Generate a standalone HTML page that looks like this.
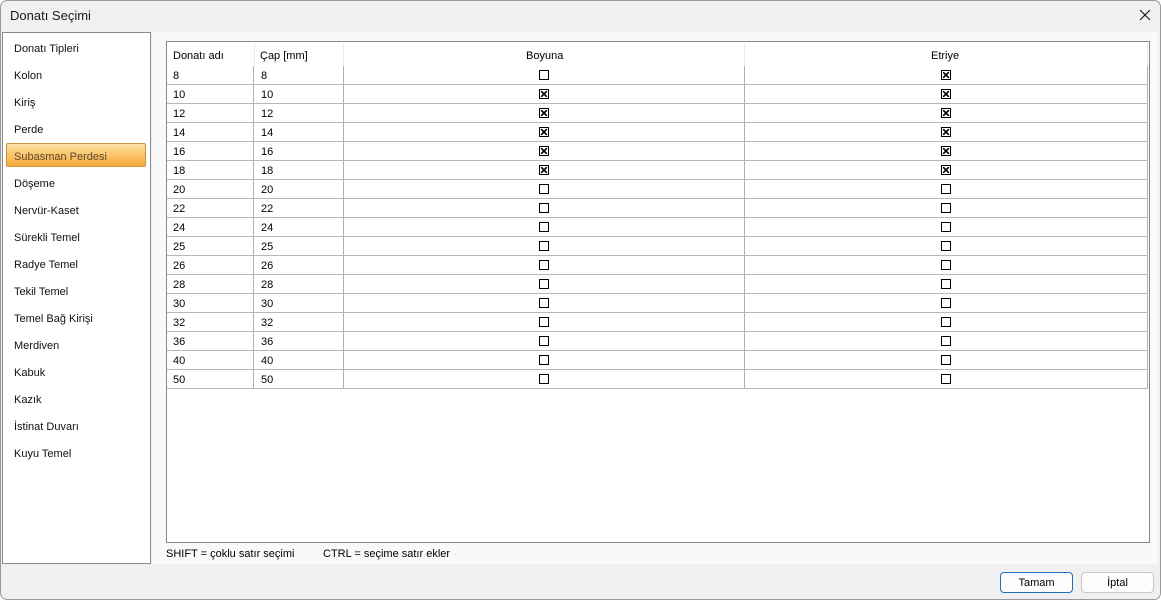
<!DOCTYPE html>
<html><head><meta charset="utf-8"><style>
*{margin:0;padding:0;box-sizing:border-box}
body{width:1161px;height:600px;background:#fff;font-family:"Liberation Sans",sans-serif;font-size:12px;color:#000;position:relative;overflow:hidden}
.win{position:absolute;left:0;top:0;width:1161px;height:600px;background:#f0f0f0;border-radius:7px;overflow:hidden}
.frame{position:absolute;left:0;top:0;width:1161px;height:600px;border:1px solid #9a9a9a;border-radius:7px;pointer-events:none}
.title{position:absolute;left:10px;top:8px;font-size:13px;color:#1a1a1a}
.x{position:absolute;left:1138px;top:8px}
.list{position:absolute;left:2px;top:32px;width:149px;height:532px;background:#fff;border:1px solid #8a8a8a}
.li{position:absolute;left:11px;font-size:11px;color:#111}
.sel{position:absolute;left:3px;top:110px;width:140px;height:24px;border:1px solid #c9963a;border-radius:2px;background:linear-gradient(#fde2a8,#fbc46a 50%,#f6a93c);}
.rp{position:absolute;left:152px;top:32px;width:1006px;height:532px;background:#f9f9f9}
.grid{position:absolute;left:166px;top:41px;width:984px;height:502px;background:#fff;border:1px solid #828790}
.c{position:absolute;font-size:11px}
.hl{position:absolute;height:1px;background:#b8b8b8}
.vl{position:absolute;width:1px;background:#b0b0b0}
.cb{position:absolute;width:10px;height:10px;border:1px solid #000;background:#fff}
.btn{position:absolute;top:572px;width:73px;height:21px;border:1px solid #c8c8c8;border-radius:4px;background:#fdfdfd;font-size:11px;text-align:center;line-height:20px}
</style></head><body><div class="win">
<div class="title">Donatı Seçimi</div>
<svg class="x" width="14" height="14" viewBox="0 0 14 14"><path d="M2 2L12 12M12 2L2 12" stroke="#222" stroke-width="1.2"/></svg>
<div class="list">
<div class="sel"></div>
<div class="li" style="top:10px">Donatı Tipleri</div>
<div class="li" style="top:37px">Kolon</div>
<div class="li" style="top:64px">Kiriş</div>
<div class="li" style="top:91px">Perde</div>
<div class="li" style="top:118px;color:#5a4a30">Subasman Perdesi</div>
<div class="li" style="top:145px">Döşeme</div>
<div class="li" style="top:172px">Nervür-Kaset</div>
<div class="li" style="top:199px">Sürekli Temel</div>
<div class="li" style="top:226px">Radye Temel</div>
<div class="li" style="top:253px">Tekil Temel</div>
<div class="li" style="top:280px">Temel Bağ Kirişi</div>
<div class="li" style="top:307px">Merdiven</div>
<div class="li" style="top:334px">Kabuk</div>
<div class="li" style="top:361px">Kazık</div>
<div class="li" style="top:388px">İstinat Duvarı</div>
<div class="li" style="top:415px">Kuyu Temel</div>
</div>
<div class="rp"></div>
<div class="grid"></div>
<div id="g"></div>
<div class="c" style="left:166px;top:548px;font-size:11px">SHIFT = çoklu satır seçimi</div>
<div class="c" style="left:323px;top:548px;font-size:11px">CTRL = seçime satır ekler</div>
<div class="btn" style="left:1000px;border:1px solid #1a6fc4">Tamam</div>
<div class="btn" style="left:1081px">İptal</div>
</div>
<div class="frame"></div>
<script>
var g=document.getElementById('g'),h='';
var vals=[8,10,12,14,16,18,20,22,24,25,26,28,30,32,36,40,50];
var b=[0,1,1,1,1,1];var e=[1,1,1,1,1,1];
h+='<div class="c" style="left:173px;top:50px">Donatı adı</div><div class="c" style="left:260px;top:50px">Çap [mm]</div><div class="c" style="left:526px;top:50px">Boyuna</div><div class="c" style="left:931px;top:50px">Etriye</div>';
h+='<div class="vl" style="left:254px;top:43px;height:23px;background:#e8e8e8"></div><div class="vl" style="left:343px;top:43px;height:23px;background:#e8e8e8"></div><div class="vl" style="left:744px;top:43px;height:23px;background:#e8e8e8"></div><div class="vl" style="left:1147px;top:43px;height:23px;background:#e8e8e8"></div>';
h+='<div class="vl" style="left:253px;top:66px;height:323px"></div><div class="vl" style="left:343px;top:66px;height:323px"></div><div class="vl" style="left:744px;top:66px;height:323px"></div><div class="vl" style="left:1147px;top:66px;height:323px"></div>';
function cb(x,y,c){var s='<div class="cb" style="left:'+x+'px;top:'+y+'px"></div>';if(c)s='<svg style="position:absolute;left:'+x+'px;top:'+y+'px" width="10" height="10"><rect x="0.5" y="0.5" width="9" height="9" fill="#fff" stroke="#000"/><path d="M2.2 2.2L7.8 7.8M7.8 2.2L2.2 7.8" stroke="#000" stroke-width="1.7"/></svg>';return s;}
for(var i=0;i<17;i++){var y=66+i*19;
h+='<div class="c" style="left:173px;top:'+(y+4)+'px">'+vals[i]+'</div><div class="c" style="left:261px;top:'+(y+4)+'px">'+vals[i]+'</div>';
h+=cb(539,y+4,b[i]);h+=cb(941,y+4,e[i]);
h+='<div class="hl" style="left:167px;top:'+(y+18)+'px;width:981px"></div>';}
g.innerHTML=h;
</script>
</body></html>
